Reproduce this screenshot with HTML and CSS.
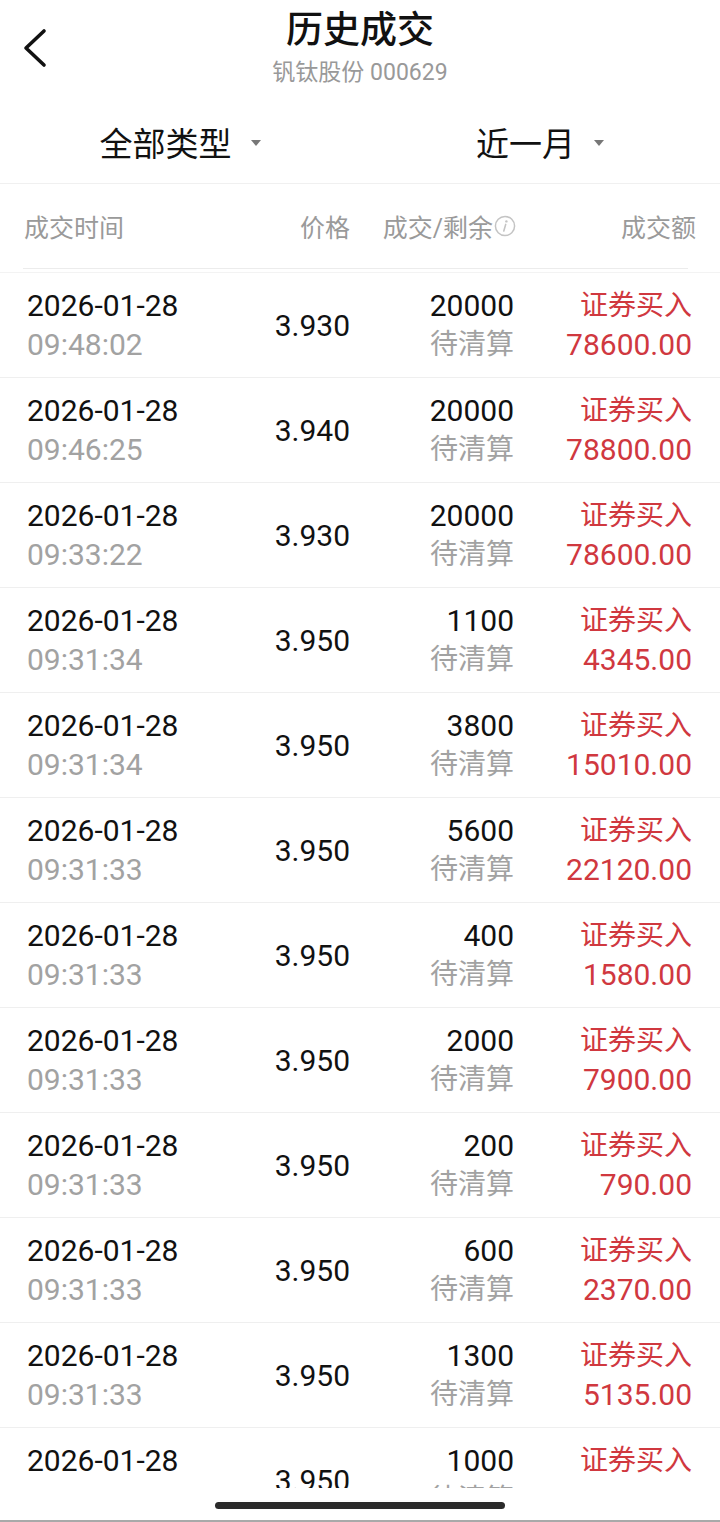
FILE: index.html
```html
<!DOCTYPE html>
<html lang="zh-CN">
<head>
    <meta charset="UTF-8">
    <meta name="viewport" content="width=device-width, initial-scale=1.0">
    <title>历史成交</title>
    <link rel="stylesheet" href="styles.css">
</head>
<body>
    <div class="page">
        <!-- Top bar -->
        <div class="navbar">
            <button class="back" aria-label="返回">
                <svg width="28" height="42" viewBox="0 0 28 42">
                    <polyline points="22,4 4,21 22,38" fill="none" stroke="#111" stroke-width="3.6" stroke-linecap="round" stroke-linejoin="round"/>
                </svg>
            </button>
            <div class="title-box">
                <div class="title">历史成交</div>
                <div class="subtitle">钒钛股份 000629</div>
            </div>
            <div></div>
        </div>

        <!-- Filters -->
        <div class="filters">
            <div class="filter">全部类型<span class="caret"></span></div>
            <div class="filter">近一月<span class="caret"></span></div>
        </div>

        <!-- Column headers -->
        <div class="thead">
            <div class="th left">成交时间</div>
            <div class="th">价格</div>
            <div class="th">成交/剩余<svg class="info" width="22" height="22" viewBox="0 0 22 22">
                    <circle cx="11" cy="11" r="9.6" fill="none" stroke="#c4c4c4" stroke-width="1.5"/>
                    <circle cx="12.4" cy="6.4" r="1.2" fill="#c4c4c4"/>
                    <path d="M11.7 9.4 L9.8 16" stroke="#c4c4c4" stroke-width="1.6" stroke-linecap="round"/>
                </svg></div>
            <div class="th">成交额</div>
        </div>
        <div class="thead-line"></div>

        <!-- Trades -->
        <div class="list">
            <div class="row">
                <div class="cell left"><div class="num">2026-01-28</div><div class="num grey">09:48:02</div></div>
                <div class="cell price num">3.930</div>
                <div class="cell"><div class="num">20000</div><div class="cn grey">待清算</div></div>
                <div class="cell red"><div class="cn">证券买入</div><div class="num">78600.00</div></div>
            </div>
            <div class="row">
                <div class="cell left"><div class="num">2026-01-28</div><div class="num grey">09:46:25</div></div>
                <div class="cell price num">3.940</div>
                <div class="cell"><div class="num">20000</div><div class="cn grey">待清算</div></div>
                <div class="cell red"><div class="cn">证券买入</div><div class="num">78800.00</div></div>
            </div>
            <div class="row">
                <div class="cell left"><div class="num">2026-01-28</div><div class="num grey">09:33:22</div></div>
                <div class="cell price num">3.930</div>
                <div class="cell"><div class="num">20000</div><div class="cn grey">待清算</div></div>
                <div class="cell red"><div class="cn">证券买入</div><div class="num">78600.00</div></div>
            </div>
            <div class="row">
                <div class="cell left"><div class="num">2026-01-28</div><div class="num grey">09:31:34</div></div>
                <div class="cell price num">3.950</div>
                <div class="cell"><div class="num">1100</div><div class="cn grey">待清算</div></div>
                <div class="cell red"><div class="cn">证券买入</div><div class="num">4345.00</div></div>
            </div>
            <div class="row">
                <div class="cell left"><div class="num">2026-01-28</div><div class="num grey">09:31:34</div></div>
                <div class="cell price num">3.950</div>
                <div class="cell"><div class="num">3800</div><div class="cn grey">待清算</div></div>
                <div class="cell red"><div class="cn">证券买入</div><div class="num">15010.00</div></div>
            </div>
            <div class="row">
                <div class="cell left"><div class="num">2026-01-28</div><div class="num grey">09:31:33</div></div>
                <div class="cell price num">3.950</div>
                <div class="cell"><div class="num">5600</div><div class="cn grey">待清算</div></div>
                <div class="cell red"><div class="cn">证券买入</div><div class="num">22120.00</div></div>
            </div>
            <div class="row">
                <div class="cell left"><div class="num">2026-01-28</div><div class="num grey">09:31:33</div></div>
                <div class="cell price num">3.950</div>
                <div class="cell"><div class="num">400</div><div class="cn grey">待清算</div></div>
                <div class="cell red"><div class="cn">证券买入</div><div class="num">1580.00</div></div>
            </div>
            <div class="row">
                <div class="cell left"><div class="num">2026-01-28</div><div class="num grey">09:31:33</div></div>
                <div class="cell price num">3.950</div>
                <div class="cell"><div class="num">2000</div><div class="cn grey">待清算</div></div>
                <div class="cell red"><div class="cn">证券买入</div><div class="num">7900.00</div></div>
            </div>
            <div class="row">
                <div class="cell left"><div class="num">2026-01-28</div><div class="num grey">09:31:33</div></div>
                <div class="cell price num">3.950</div>
                <div class="cell"><div class="num">200</div><div class="cn grey">待清算</div></div>
                <div class="cell red"><div class="cn">证券买入</div><div class="num">790.00</div></div>
            </div>
            <div class="row">
                <div class="cell left"><div class="num">2026-01-28</div><div class="num grey">09:31:33</div></div>
                <div class="cell price num">3.950</div>
                <div class="cell"><div class="num">600</div><div class="cn grey">待清算</div></div>
                <div class="cell red"><div class="cn">证券买入</div><div class="num">2370.00</div></div>
            </div>
            <div class="row">
                <div class="cell left"><div class="num">2026-01-28</div><div class="num grey">09:31:33</div></div>
                <div class="cell price num">3.950</div>
                <div class="cell"><div class="num">1300</div><div class="cn grey">待清算</div></div>
                <div class="cell red"><div class="cn">证券买入</div><div class="num">5135.00</div></div>
            </div>
            <div class="row">
                <div class="cell left"><div class="num">2026-01-28</div><div class="num grey">09:31:32</div></div>
                <div class="cell price num">3.950</div>
                <div class="cell"><div class="num">1000</div><div class="cn grey">待清算</div></div>
                <div class="cell red"><div class="cn">证券买入</div><div class="num">3950.00</div></div>
            </div>
        </div>

        <!-- Home indicator -->
        <div class="footer">
            <div class="home-bar"></div>
        </div>
    </div>
</body>
</html>
```

FILE: styles.css
```css
body {
    margin: 0;
    background: #fff;
    color: #111;
    font-family: Roboto, "Noto Sans CJK SC", sans-serif;
}

.page {
    width: 720px;
    height: 1522px;
    display: flex;
    flex-direction: column;
    overflow: hidden;
}

/* Top bar */
.navbar {
    height: 100px;
    display: grid;
    grid-template-columns: 1fr auto 1fr;
    align-items: start;
}

.back {
    width: 60px;
    height: 60px;
    margin: 18px 0 0 22px;
    padding: 0;
    border: none;
    background: none;
    display: flex;
    align-items: center;
    justify-content: flex-start;
}

.title-box {
    text-align: center;
    padding-top: 9px;
}

.title {
    font-size: 37px;
    line-height: 44px;
    font-weight: 500;
    color: #111;
}

.subtitle {
    margin-top: 5px;
    font-size: 23px;
    line-height: 30px;
    color: #999;
}

/* Filters */
.filters {
    height: 83px;
    display: grid;
    grid-template-columns: 1fr 1fr;
    border-bottom: 1px solid #f0f0f0;
}

.filter {
    display: flex;
    align-items: center;
    justify-content: center;
    font-size: 33px;
    color: #111;
}

.caret {
    width: 0;
    height: 0;
    margin-left: 19px;
    margin-top: 2px;
    border-left: 5px solid transparent;
    border-right: 5px solid transparent;
    border-top: 6px solid #777;
}

/* Column headers */
.thead {
    height: 84px;
    display: grid;
    grid-template-columns: 180px 146px 166px 180px;
    padding: 0 24px 0 24px;
    align-items: center;
    font-size: 25px;
    color: #9a9a9a;
}

.th {
    text-align: right;
    display: flex;
    align-items: center;
    justify-content: flex-end;
    white-space: nowrap;
}

.th.left {
    justify-content: flex-start;
}

.info {
    flex-shrink: 0;
    margin-left: 1px;
}

.thead-line {
    height: 1px;
    margin: 0 32px 3px 23px;
    background: #ececec;
}

/* Trade rows */
.list {
    flex: 1;
    overflow: hidden;
    border-top: 1px solid #f3f3f3;
}

.row {
    height: 104px;
    display: grid;
    grid-template-columns: 180px 143px 164px 178px;
    padding: 0 28px 0 27px;
    align-items: center;
    border-bottom: 1px solid #efefef;
}

.cell {
    text-align: right;
    line-height: 39px;
}

.cell.left {
    text-align: left;
}

.num {
    font-size: 30px;
}

.cn {
    font-size: 28px;
}

.grey {
    color: #a2a2a2;
}

.red {
    color: #d0383f;
}

.price {
    color: #111;
}

/* Home indicator */
.footer {
    height: 32px;
    display: flex;
    justify-content: center;
    border-bottom: 2px solid #a9a9a9;
}

.home-bar {
    width: 290px;
    height: 7px;
    margin-top: 14px;
    border-radius: 4px;
    background: #2b2b2b;
}
```
